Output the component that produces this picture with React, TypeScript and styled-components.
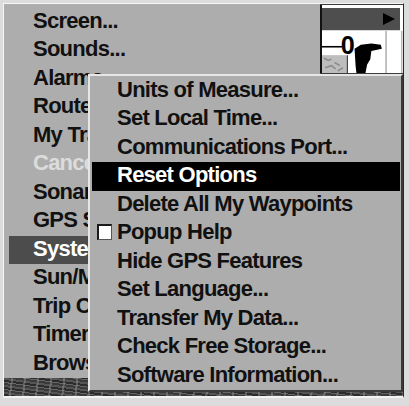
import React from "react";
import styled, { createGlobalStyle } from "styled-components";

const Global = createGlobalStyle`
  html, body { margin: 0; padding: 0; background: #ffffff; }
  #root { width: 409px; height: 406px; }
`;

const Screen = styled.div`
  position: relative;
  width: 409px;
  height: 406px;
  box-sizing: border-box;
  background: #dcdcdc;
  padding: 3px 5px 8px 3px;
  font-family: "Liberation Sans", Arial, sans-serif;
  font-weight: 700;
`;

const Inner = styled.div`
  height: 100%;
  box-sizing: border-box;
  display: flex;
  flex-direction: column;
  border-top: 1px solid #f6f6f6;
  border-left: 1px solid #f6f6f6;
  border-right: 1px solid #2a2a2a;
  border-bottom: 2px solid #f2f2f2;
  background: #3c3c3c;
`;

const TopRow = styled.div`
  display: flex;
  height: 374px;
`;

const Menu = styled.div`
  width: 316px;
  background: #adadad;
  box-sizing: border-box;
  padding: 4px 0 0 5px;
  display: flex;
  flex-direction: column;
`;

const Row = styled.div<{ $active?: boolean; $disabled?: boolean; $inverse?: boolean }>`
  height: 28.5px;
  box-sizing: border-box;
  display: flex;
  align-items: flex-start;
  font-size: 22px;
  letter-spacing: -0.75px;
  line-height: 26px;
  white-space: nowrap;
  overflow: hidden;
  color: ${(p) => (p.$active || p.$inverse ? "#ffffff" : p.$disabled ? "#dcdcdc" : "#111111")};
  background: ${(p) => (p.$active ? "#4c4c4c" : p.$inverse ? "#000000" : "transparent")};
`;

const MenuLabel = styled.span`
  padding-left: 24px;
`;

const Pane = styled.div`
  flex: 1;
  margin-top: 1px;
  height: 68px;
  border-left: 2px solid #111111;
  background: #ffffff;
  display: flex;
  flex-direction: column;
`;

const TitleBar = styled.div`
  margin-top: 3px;
  margin-right: 3px;
  height: 22px;
  background: #4e4e4e;
  border-bottom: 1px solid #d8d8d8;
  display: flex;
  justify-content: flex-end;
  align-items: center;
  padding-right: 5px;
`;

const Chart = styled.svg`
  display: block;
  flex: 1;
  width: 100%;
`;

const MapStrip = styled.div`
  flex: 1;
  background:
    repeating-linear-gradient(97deg, transparent 0 7px, rgba(150,150,150,0.45) 7px 9px, transparent 9px 13px),
    repeating-linear-gradient(8deg, #2c2c2c 0 2px, #555555 2px 4px, #3a3a3a 4px 6px, #666666 6px 7px);
`;

const Popup = styled.div`
  position: absolute;
  left: 88px;
  top: 74px;
  width: 315px;
  height: 318px;
  box-sizing: border-box;
  background: #adadad;
  border-top: 2px solid #e6e6e6;
  border-left: 2px solid #e6e6e6;
  border-right: 2px solid #3a3a3a;
  border-bottom: 2px solid #3a3a3a;
  padding: 0.5px 1px 0 2px;
  display: flex;
  flex-direction: column;
`;

const Lead = styled.span`
  width: 25px;
  flex: none;
  display: flex;
  align-items: flex-start;
`;

const Check = styled.span`
  margin: 5px 0 0 5px;
  width: 15px;
  height: 16px;
  box-sizing: border-box;
  background: #ffffff;
  border-top: 2px solid #1a1a1a;
  border-left: 2px solid #1a1a1a;
  border-right: 1px solid #555555;
  border-bottom: 1px solid #555555;
`;

const menuItems = [
  "Screen...",
  "Sounds...",
  "Alarms...",
  "Routes...",
  "My Trails...",
  "Cancel Navigation",
  "Sonar...",
  "GPS Setup...",
  "System Setup...",
  "Sun/Moon Calc...",
  "Trip Calculator...",
  "Timers...",
  "Browse...",
];

const popupItems = [
  "Units of Measure...",
  "Set Local Time...",
  "Communications Port...",
  "Reset Options",
  "Delete All My Waypoints",
  "Popup Help",
  "Hide GPS Features",
  "Set Language...",
  "Transfer My Data...",
  "Check Free Storage...",
  "Software Information...",
];

export default function App() {
  return (
    <>
      <Global />
      <Screen>
        <Inner>
          <TopRow>
            <Menu>
              {menuItems.map((m, i) => (
                <Row key={m} $active={i === 8} $disabled={i === 5}>
                  <MenuLabel>{m}</MenuLabel>
                </Row>
              ))}
            </Menu>
            <Pane>
              <TitleBar>
                <svg width="12" height="12" viewBox="0 0 12 12">
                  <polygon points="0,0 12,6 0,12" fill="#000" />
                </svg>
              </TitleBar>
              <Chart viewBox="0 0 81 40" preserveAspectRatio="xMinYMin slice">
                <rect x="0" y="23" width="23" height="20" fill="#bdbdbd" />
                <path d="M2 26 l4 2 l3 -1 M12 30 l5 3 M3 35 l6 -2 l4 3 M15 38 l5 -3" stroke="#8c8c8c" strokeWidth="1.5" fill="none" />
                <line x1="0" y1="15" x2="19" y2="15" stroke="#000" strokeWidth="1.5" />
                <line x1="24" y1="23" x2="24" y2="42" stroke="#000" strokeWidth="1" />
                <text x="24.5" y="22" textAnchor="middle" fontFamily="Liberation Sans, Arial, sans-serif" fontWeight="700" fontSize="24" fill="#000">0</text>
                <path d="M31 17 L37 13 L47 12 L56 13 L57 17 L47 19 L46 27 L43 32 L41 42 L33 42 L32 33 Z" fill="#000" />
                <line x1="61" y1="0" x2="61" y2="42" stroke="#8a8a8a" strokeWidth="1" />
                <line x1="76" y1="0" x2="76" y2="42" stroke="#9a9a9a" strokeWidth="1" />
              </Chart>
            </Pane>
          </TopRow>
          <MapStrip />
        </Inner>
        <Popup>
          {popupItems.map((p, i) => (
            <Row key={p} $inverse={i === 3}>
              <Lead>{i === 5 && <Check />}</Lead>
              <span>{p}</span>
            </Row>
          ))}
        </Popup>
      </Screen>
    </>
  );
}
